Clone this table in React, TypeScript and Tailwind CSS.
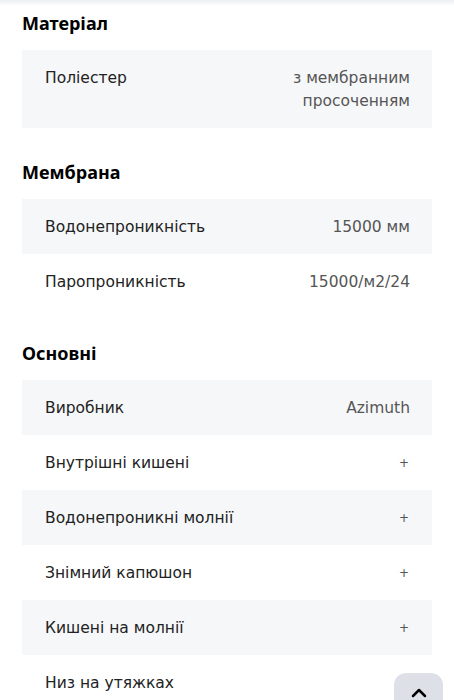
import React from 'react';
import { ChevronUp } from 'lucide-react';

type Row = { label: string; value: string };

const sections: { title: string; rows: Row[] }[] = [
  {
    title: 'Матеріал',
    rows: [{ label: 'Поліестер', value: 'з мембранним просоченням' }],
  },
  {
    title: 'Мембрана',
    rows: [
      { label: 'Водонепроникність', value: '15000 мм' },
      { label: 'Паропроникність', value: '15000/м2/24' },
    ],
  },
  {
    title: 'Основні',
    rows: [
      { label: 'Виробник', value: 'Azimuth' },
      { label: 'Внутрішні кишені', value: '+' },
      { label: 'Водонепроникні молнії', value: '+' },
      { label: 'Знімний капюшон', value: '+' },
      { label: 'Кишені на молнії', value: '+' },
      { label: 'Низ на утяжках', value: '+' },
    ],
  },
];

export default function App() {
  return (
    <div className="min-h-screen bg-white font-['Noto_Sans',sans-serif]">
      {/* header shadow from the sticky bar above */}
      <div className="h-[6px] bg-gradient-to-b from-[#eceef1] to-white" />

      <div className="px-[22px] pb-10">
        {sections.map((s, si) => (
          <section key={s.title} className={si === 0 ? 'pt-[5px]' : 'pt-[32px]'}>
            <h2 className="text-[18px] leading-[24px] font-bold text-black mb-[15px]">{s.title}</h2>
            <div>
              {s.rows.map((r, i) => (
                <div
                  key={r.label}
                  className={`flex justify-between items-center gap-4 pl-[23px] pr-[22px] pt-[17px] pb-[15px] font-['DejaVu_Sans',sans-serif] text-[15.5px] leading-[23px] ${
                    i % 2 === 0 ? 'bg-[#f6f7f9]' : 'bg-white'
                  }`}
                >
                  <span className="text-[#222] self-start">{r.label}</span>
                  {r.value === '+' ? (
                    <span className="text-[12px] text-[#555] pr-[1px]">+</span>
                  ) : (
                    <span className="max-w-[45%] text-right text-[#555]">{r.value}</span>
                  )}
                </div>
              ))}
            </div>
          </section>
        ))}
      </div>

      <button className="fixed right-[11px] top-[673px] w-[49px] h-[49px] rounded-xl bg-[#dde1e7] flex justify-center pt-[8px]">
        <ChevronUp className="w-6 h-6 text-black" strokeWidth={2.5} />
      </button>
    </div>
  );
}
